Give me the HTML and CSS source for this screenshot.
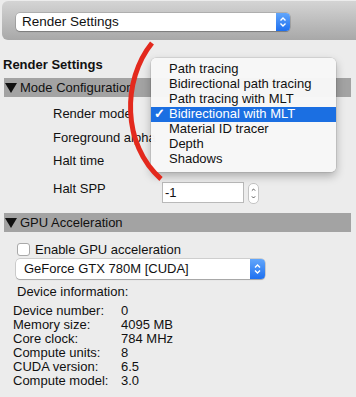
FILE: index.html
```html
<!DOCTYPE html>
<html>
<head>
<meta charset="utf-8">
<link rel="stylesheet" href="styles.css">
</head>
<body>
<div class="toolbar">
  <div class="popup popup-top">
    <span class="popup-text">Render Settings</span>
    <span class="stepper-blue">
      <svg width="14" height="18" viewBox="0 0 14 18"><path d="M4.5 7.5 L7 5 L9.5 7.5 M4.5 10.5 L7 13 L9.5 10.5" fill="none" stroke="#fff" stroke-width="1.4"/></svg>
    </span>
  </div>
</div>

<div class="title">Render Settings</div>

<div class="section-head"><span class="tri"></span>Mode Configuration</div>
<div class="mode-body">
  <div class="row r1"><span class="label">Render mode</span></div>
  <div class="row r2"><span class="label">Foreground alpha</span></div>
  <div class="row r3"><span class="label">Halt time</span></div>
  <div class="row r4">
    <span class="label">Halt SPP</span>
    <div class="field">-1</div>
    <div class="stepper">
      <svg width="11" height="21" viewBox="0 0 11 21"><path d="M3.5 7 L5.5 5 L7.5 7 M3.5 14 L5.5 16 L7.5 14" fill="none" stroke="#444" stroke-width="1.1"/></svg>
    </div>
  </div>
</div>

<div class="section-head gpu-head"><span class="tri"></span>GPU Acceleration</div>
<div class="gpu-body">
  <label class="check-row"><span class="checkbox"></span>Enable GPU acceleration</label>
  <div class="popup popup-gpu">
    <span class="popup-text">GeForce GTX 780M [CUDA]</span>
    <span class="stepper-blue">
      <svg width="15" height="20" viewBox="0 0 15 20"><path d="M5 8.5 L7.5 6 L10 8.5 M5 11.5 L7.5 14 L10 11.5" fill="none" stroke="#fff" stroke-width="1.4"/></svg>
    </span>
  </div>
  <div class="devinfo">Device information:</div>
  <div class="devtable">
    <span>Device number:</span><span>0</span>
    <span>Memory size:</span><span>4095 MB</span>
    <span>Core clock:</span><span>784 MHz</span>
    <span>Compute units:</span><span>8</span>
    <span>CUDA version:</span><span>6.5</span>
    <span>Compute model:</span><span>3.0</span>
  </div>
</div>

<div class="menu">
  <div class="item">Path tracing</div>
  <div class="item">Bidirectional path tracing</div>
  <div class="item">Path tracing with MLT</div>
  <div class="item selected"><span class="check">&#10003;</span>Bidirectional with MLT</div>
  <div class="item">Material ID tracer</div>
  <div class="item">Depth</div>
  <div class="item">Shadows</div>
</div>

<svg class="arc" width="356" height="397" viewBox="0 0 356 397">
  <path d="M152 43 C 122 80, 122 145, 161 179" fill="none" stroke="#e3291d" stroke-width="5"/>
</svg>
</body>
</html>
```

FILE: styles.css
```css
html, body {
  margin: 0;
  padding: 0;
}
body {
  width: 356px;
  height: 397px;
  overflow: hidden;
  background: #ececec;
  font-family: "Liberation Sans", Arial, sans-serif;
  font-size: 13px;
  color: #111;
  position: relative;
}
.toolbar {
  margin: 1px 0 0 2px;
  height: 39px;
  box-sizing: border-box;
  padding: 12px 0 0 14px;
  border-radius: 6px 0 0 6px;
  background: linear-gradient(#d4d4d4, #a8a8a8);
}
.popup {
  display: flex;
  align-items: stretch;
  background: #fff;
  border-radius: 4px;
  box-shadow: 0 0 0 0.5px rgba(0,0,0,0.25), 0 1px 1px rgba(0,0,0,0.2);
  overflow: hidden;
}
.popup-top {
  width: 274px;
  height: 18px;
}
.popup-text {
  flex: 1;
  padding-left: 6px;
  line-height: 18px;
  font-size: 13.5px;
}
.stepper-blue {
  width: 14px;
  background: linear-gradient(#62a6fb, #1e70f0);
  display: flex;
  align-items: center;
  justify-content: center;
}
.title {
  margin: 17px 0 0 3px;
  font-weight: bold;
  line-height: 16px;
}
.section-head {
  margin: 5px 5px 0 4px;
  height: 19px;
  line-height: 19px;
  background: #a3a3a3;
  font-size: 13px;
  display: flex;
  align-items: center;
}
.tri {
  width: 0;
  height: 0;
  margin: 1px 3px 0 1px;
  border-left: 6px solid transparent;
  border-right: 6px solid transparent;
  border-top: 10px solid #111;
}
.mode-body {
  padding-top: 4px;
}
.row {
  display: flex;
  align-items: center;
  padding-left: 53px;
}
.r1, .r2 { height: 24px; }
.r3 { height: 22px; }
.r4 {
  align-items: flex-start;
  padding-top: 11px;
}
.r4 .label {
  width: 109px;
  margin-top: -1px;
  line-height: 16px;
}
.field {
  width: 82px;
  height: 21px;
  box-sizing: border-box;
  background: #fff;
  border: 1px solid #b9b9b9;
  padding-left: 2px;
  line-height: 19px;
}
.stepper {
  margin: 1px 0 0 4px;
  width: 11px;
  height: 21px;
  box-sizing: border-box;
  border: 1px solid #c4c4c4;
  border-radius: 5px;
  background: #fff;
  display: flex;
  align-items: center;
  justify-content: center;
}
.stepper svg { display: block; }
.gpu-head {
  margin-top: 9px;
}
.gpu-body {
  padding-left: 16px;
}
.check-row {
  display: flex;
  align-items: center;
  margin-top: 9px;
  padding-left: 1px;
  height: 16px;
}
.checkbox {
  width: 13px;
  height: 13px;
  box-sizing: border-box;
  background: #fff;
  border: 1px solid #a9a9a9;
  border-radius: 3px;
  margin-right: 5px;
}
.popup-gpu {
  margin-top: 2px;
  width: 249px;
  height: 20px;
}
.popup-gpu .popup-text {
  padding-left: 8px;
  line-height: 20px;
  font-size: 13px;
}
.popup-gpu .stepper-blue { width: 15px; }
.devinfo {
  margin: 5px 0 0 1px;
  line-height: 16px;
}
.devtable {
  margin: 4px 0 0 -3px;
  display: grid;
  grid-template-columns: 108px auto;
  grid-auto-rows: 14px;
  line-height: 14px;
}
.menu {
  position: absolute;
  left: 151px;
  top: 58px;
  width: 185px;
  box-sizing: border-box;
  padding: 4px 0 5px;
  background: rgba(247,247,247,0.98);
  border-radius: 5px;
  box-shadow: 0 0 0 0.5px rgba(0,0,0,0.15), 0 4px 10px rgba(0,0,0,0.28);
}
.item {
  position: relative;
  height: 15px;
  line-height: 14px;
  padding-left: 18px;
  font-size: 13px;
  color: #111;
}
.item.selected {
  background: #1b6fe2;
  color: #fff;
}
.check {
  position: absolute;
  left: 3px;
  top: 0;
  font-size: 13px;
  font-weight: bold;
}
.arc {
  position: absolute;
  left: 0;
  top: 0;
  pointer-events: none;
}
```
